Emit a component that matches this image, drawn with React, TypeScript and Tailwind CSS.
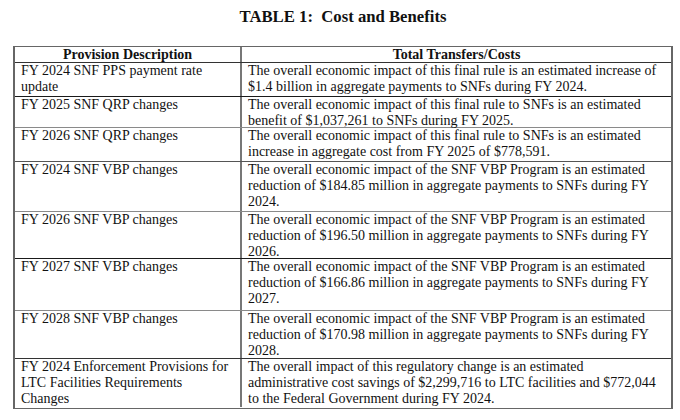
type Row = {
  left: string[];
  right: string[];
  h: string;
  line: string;
};

const rows: Row[] = [
  {
    left: ["FY 2024 SNF PPS payment rate", "update"],
    right: [
      "The overall economic impact of this final rule is an estimated increase of",
      "$1.4 billion in aggregate payments to SNFs during FY 2024.",
    ],
    h: "h-[34px]",
    line: "border-[#1a1a1a]",
  },
  {
    left: ["FY 2025 SNF QRP changes"],
    right: [
      "The overall economic impact of this final rule to SNFs is an estimated",
      "benefit of $1,037,261 to SNFs during FY 2025.",
    ],
    h: "h-[31px]",
    line: "border-[#8a8a8a]",
  },
  {
    left: ["FY 2026 SNF QRP changes"],
    right: [
      "The overall economic impact of this final rule to SNFs is an estimated",
      "increase in aggregate cost from FY 2025 of $778,591.",
    ],
    h: "h-[34px]",
    line: "border-[#555555]",
  },
  {
    left: ["FY 2024 SNF VBP changes"],
    right: [
      "The overall economic impact of the SNF VBP Program is an estimated",
      "reduction of $184.85 million in aggregate payments to SNFs during FY",
      "2024.",
    ],
    h: "h-[50px]",
    line: "border-[#8a8a8a]",
  },
  {
    left: ["FY 2026 SNF VBP changes"],
    right: [
      "The overall economic impact of the SNF VBP Program is an estimated",
      "reduction of $196.50 million in aggregate payments to SNFs during FY",
      "2026.",
    ],
    h: "h-[47px]",
    line: "border-[#1a1a1a]",
  },
  {
    left: ["FY 2027 SNF VBP changes"],
    right: [
      "The overall economic impact of the SNF VBP Program is an estimated",
      "reduction of $166.86 million in aggregate payments to SNFs during FY",
      "2027.",
    ],
    h: "h-[52px]",
    line: "border-[#8a8a8a]",
  },
  {
    left: ["FY 2028 SNF VBP changes"],
    right: [
      "The overall economic impact of the SNF VBP Program is an estimated",
      "reduction of $170.98 million in aggregate payments to SNFs during FY",
      "2028.",
    ],
    h: "h-[48px]",
    line: "border-[#333333]",
  },
  {
    left: ["FY 2024 Enforcement Provisions for", "LTC Facilities Requirements", "Changes"],
    right: [
      "The overall impact of this regulatory change is an estimated",
      "administrative cost savings of $2,299,716 to LTC facilities and $772,044",
      "to the Federal Government during FY 2024.",
    ],
    h: "h-[49px]",
    line: "border-transparent",
  },
];

function Lines({ lines }: { lines: string[] }) {
  return (
    <>
      {lines.map((l, i) => (
        <div key={i} className="whitespace-nowrap">
          {l}
        </div>
      ))}
    </>
  );
}

export default function App() {
  return (
    <div
      className="w-[680px] h-[420px] bg-white text-[#111] overflow-hidden"
      style={{ fontFamily: '"Liberation Serif", "Times New Roman", serif' }}
    >
      <h1 className="pt-[7px] pl-[6px] text-center text-[16.7px] leading-[20px] font-bold">
        TABLE 1:&nbsp; Cost and Benefits
      </h1>

      {/* table */}
      <div className="mt-[19px] ml-[13px] w-[660px] border-x-2 border-t border-b border-[#666] text-[14px] leading-[16px]">
        <div className="flex h-[16px] border-b border-[#333] font-bold">
          <div className="w-[227px] shrink-0 border-r-2 border-[#777] text-center">Provision Description</div>
          <div className="flex-1 text-center">Total Transfers/Costs</div>
        </div>
        {rows.map((r, i) => (
          <div key={i} className={`flex border-b ${r.h} ${r.line}`}>
            <div className="w-[227px] shrink-0 border-r-2 border-[#777] pl-[6px]">
              <Lines lines={r.left} />
            </div>
            <div className="flex-1 pl-[6px]">
              <Lines lines={r.right} />
            </div>
          </div>
        ))}
      </div>
    </div>
  );
}
